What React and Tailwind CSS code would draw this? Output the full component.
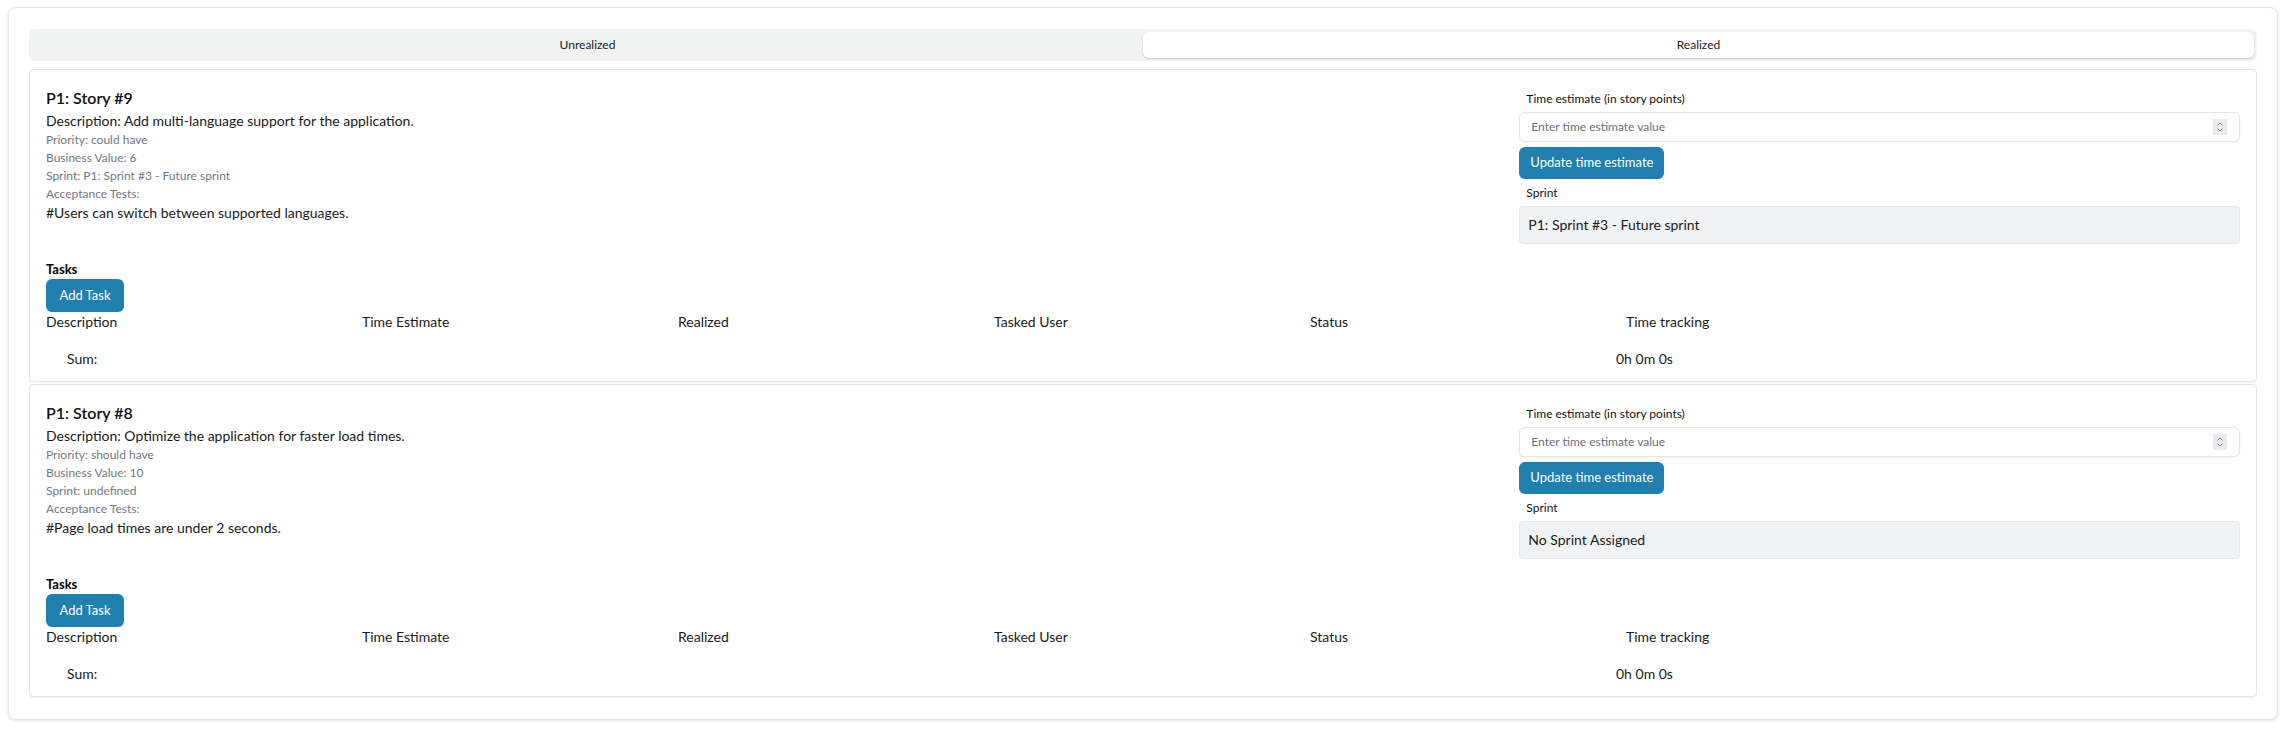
import { useState } from "react";

const stories = [
  {
    id: 9,
    description: "Add multi-language support for the application.",
    priority: "could have",
    businessValue: 6,
    sprint: "P1: Sprint #3 - Future sprint",
    tests: ["#Users can switch between supported languages."],
    sprintLabel: "P1: Sprint #3 - Future sprint",
  },
  {
    id: 8,
    description: "Optimize the application for faster load times.",
    priority: "should have",
    businessValue: 10,
    sprint: "undefined",
    tests: ["#Page load times are under 2 seconds."],
    sprintLabel: "No Sprint Assigned",
  },
];

const columns = ["Description", "Time Estimate", "Realized", "Tasked User", "Status", "Time tracking"];

function Spinner() {
  return (
    <span className="flex h-4 w-[14px] flex-col items-center justify-center bg-[#e9eaee]">
      <svg width="8" height="12" viewBox="0 0 8 12" fill="none" stroke="#8a8d93" strokeWidth="1">
        <path d="M1.5 4.5 L4 2 L6.5 4.5" />
        <path d="M1.5 7.5 L4 10 L6.5 7.5" />
      </svg>
    </span>
  );
}

function StoryCard({ story }) {
  const [estimate, setEstimate] = useState("");

  return (
    <div className="rounded-sm border border-[#e4e7e7] bg-white px-4 pt-4 pb-3 shadow-[0_1px_1px_rgba(0,0,0,0.04)]">
      <div className="grid grid-cols-3 gap-4">
        <div className="col-span-2">
          <h3 className="text-base font-semibold leading-6 text-[#111]">P1: Story #{story.id}</h3>
          <p className="mt-px text-sm leading-5 text-[#1a1a1a]">Description: {story.description}</p>
          <div className="text-xs leading-[18px] text-[#737880]">
            <p>Priority: {story.priority}</p>
            <p>Business Value: {story.businessValue}</p>
            <p>Sprint: {story.sprint}</p>
            <p>Acceptance Tests:</p>
          </div>
          {story.tests.map((t) => (
            <p key={t} className="text-sm leading-5 text-[#1a1a1a]">
              {t}
            </p>
          ))}
        </div>

        <div className="mt-1">
          <label className="block pl-[7px] text-xs leading-[18px] text-[#111]">Time estimate (in story points)</label>
          <div className="mt-1 flex h-[30px] items-center rounded-md border border-[#e3e5e7] bg-white pr-3 pl-[11px] shadow-[0_1px_2px_rgba(0,0,0,0.05)]">
            <input
              type="text"
              className="flex-1 bg-transparent text-xs text-[#222] outline-none placeholder:text-[#6b6f76]"
              placeholder="Enter time estimate value"
              value={estimate}
              onChange={(e) => setEstimate(e.target.value)}
            />
            <Spinner />
          </div>
          <button className="mt-[5px] h-8 rounded-md bg-[#1f7fae] px-[11px] text-[13px] text-white">
            Update time estimate
          </button>
          <p className="mt-[5px] pl-[7px] text-xs leading-[18px] text-[#111]">Sprint</p>
          <div className="mt-1 flex h-[38px] items-center rounded-sm border border-[#e4e6e8] bg-[#f1f2f4] px-2 text-sm text-[#1a1a1a]">
            {story.sprintLabel}
          </div>
        </div>
      </div>

      <div className="mt-4">
        <p className="text-[13px] font-bold leading-[18px] text-black">Tasks</p>
        <button className="mt-px h-[33px] w-[78px] rounded-md bg-[#1f7fae] text-[13px] text-white">Add Task</button>
        <div className="grid grid-cols-[repeat(7,316px)] text-sm leading-5 text-[#1a1a1a]">
          {columns.map((c) => (
            <div key={c}>{c}</div>
          ))}
          <div />
          <div className="col-span-5 pt-[17px] pl-[21px]">Sum:</div>
          <div className="-ml-[10px] pt-[17px]">0h 0m 0s</div>
          <div />
        </div>
      </div>
    </div>
  );
}

export default function App() {
  const [tab, setTab] = useState("realized");

  return (
    <div className="min-h-screen bg-white pt-[7px] pr-[10px] pl-2 font-['Lato',sans-serif]">
      <div className="rounded-lg border border-[#e4e6e7] px-5 pt-[21px] pb-[22px] shadow-[0_1px_3px_rgba(0,0,0,0.12)]">
        <div className="grid h-8 grid-cols-2 rounded-md bg-[#f1f2f2] p-[3px] text-xs text-[#1a1a1a]">
          <button
            onClick={() => setTab("unrealized")}
            className={tab === "unrealized" ? "rounded-md bg-white shadow-[0_1px_2px_rgba(0,0,0,0.18)]" : "rounded-md"}
          >
            Unrealized
          </button>
          <button
            onClick={() => setTab("realized")}
            className={tab === "realized" ? "rounded-md bg-white shadow-[0_1px_2px_rgba(0,0,0,0.18)]" : "rounded-md"}
          >
            Realized
          </button>
        </div>

        <div className="mt-2 flex flex-col gap-[2px]">
          {stories.map((s) => (
            <StoryCard key={s.id} story={s} />
          ))}
        </div>
      </div>
    </div>
  );
}
